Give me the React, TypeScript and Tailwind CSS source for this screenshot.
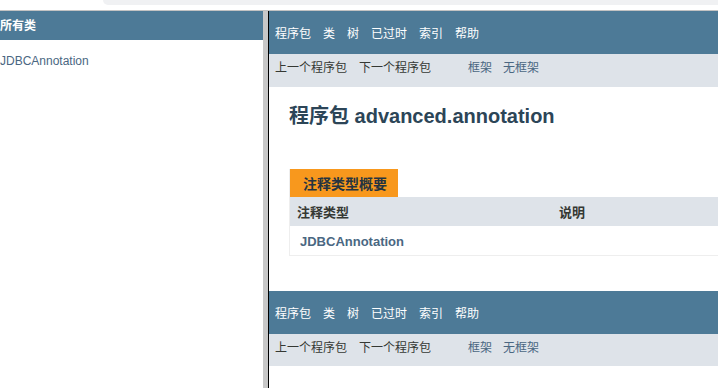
const font = "font-['Liberation_Sans','Noto_Sans_CJK_SC',sans-serif]";

function TopNav() {
  const items = ["程序包", "类", "树", "已过时", "索引", "帮助"];
  return (
    <div className="flex h-[43px] items-center gap-[12px] bg-[#4d7a97] pl-[6px] pt-[3px] text-[12px] leading-[14px] text-white">
      {items.map((t) => (
        <span key={t}>{t}</span>
      ))}
    </div>
  );
}

function SubNav({ h }: { h: string }) {
  return (
    <div className={`flex ${h} items-start bg-[#dee3e9] pl-[6px] pt-[7px] text-[12px] leading-[14px]`}>
      <span className="text-[#353833]">上一个程序包</span>
      <span className="ml-[12px] text-[#353833]">下一个程序包</span>
      <span className="ml-[37px] text-[#4a6782]">框架</span>
      <span className="ml-[11px] text-[#4a6782]">无框架</span>
    </div>
  );
}

export default function App() {
  return (
    <div className={`h-[388px] w-[718px] overflow-hidden bg-white ${font}`}>
      {/* strip above frames */}
      <div className="h-[10px] bg-white">
        <div className="ml-[103px] h-[5px] rounded-bl-[8px] bg-[#f0f1f3]" />
      </div>
      <div className="h-px bg-[#c3c3c3]" />

      <div className="flex h-[377px]">
        {/* left frame */}
        <div className="w-[263px] shrink-0">
          <div className="flex h-[29px] items-center text-[12px] font-bold leading-[14px] text-white bg-[#4d7a97]">
            所有类
          </div>
          <div className="pt-[14px] text-[12px] leading-[14px] text-[#4a6782]">JDBCAnnotation</div>
        </div>

        {/* frame divider */}
        <div className="w-[5px] shrink-0 bg-[#c8c8c8]" />
        <div className="w-px shrink-0 bg-black" />

        {/* right frame */}
        <div className="min-w-0 flex-1 overflow-hidden">
          <TopNav />
          <SubNav h="h-[33px]" />

          <h1 className="ml-[20px] mt-[17px] text-[20px] font-bold leading-[24px] text-[#2c4557]">
            程序包 advanced.annotation
          </h1>

          <div className="ml-[20px] mt-[41px] w-[600px] border-b border-l border-[#eeeeee]">
            <div className="flex h-[28px] w-[108px] items-center bg-[#f8981d] pl-[13px] pt-[1px] text-[14px] font-bold leading-[16px] text-[#253441]">
              注释类型概要
            </div>
            <div className="flex h-[29px] items-center bg-[#dee3e9] pt-[2px] text-[13px] font-bold leading-[16px] text-[#353833]">
              <div className="w-[269px] pl-[7px]">注释类型</div>
              <div>说明</div>
            </div>
            <div className="flex h-[29px] items-center bg-white pl-[10px] pt-[3px] text-[13px] font-bold leading-[16px] text-[#4a6782]">
              JDBCAnnotation
            </div>
          </div>

          <div className="mt-[35px]">
            <TopNav />
            <SubNav h="h-[32px]" />
          </div>
        </div>
      </div>
    </div>
  );
}
